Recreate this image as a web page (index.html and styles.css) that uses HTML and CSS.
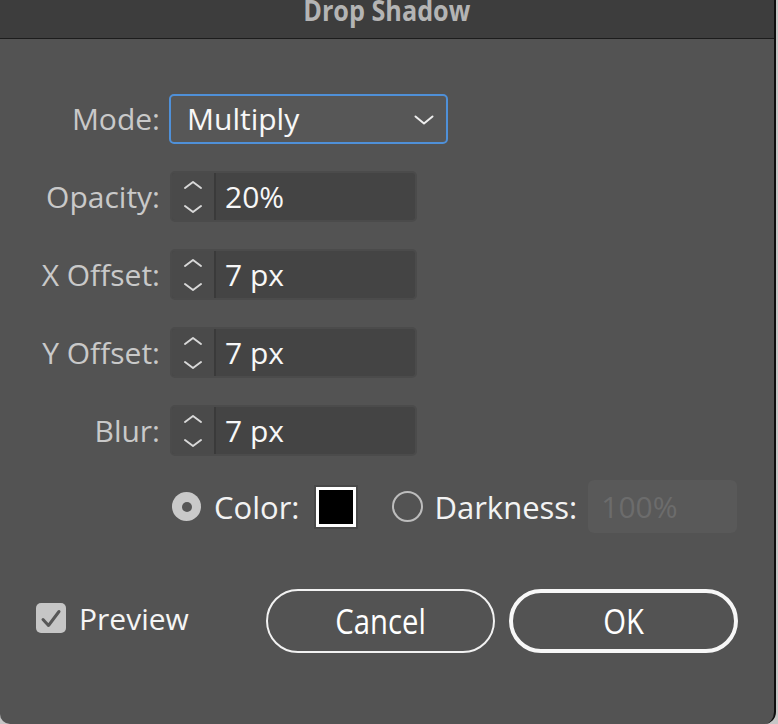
FILE: index.html
```html
<!DOCTYPE html>
<html>
<head>
<meta charset="utf-8">
<link rel="stylesheet" href="styles.css">
</head>
<body>
<div class="window">
  <div class="titlebar"><span class="title">Drop Shadow</span></div>
  <div class="content">
    <div class="form">
      <div class="label">Mode:</div>
      <div class="select">
        <span class="value">Multiply</span>
        <svg class="chev" width="20" height="10" viewBox="0 0 20 10"><path d="M1.5 1.5 L10 8.5 L18.5 1.5" fill="none" stroke="#eeeeee" stroke-width="2" stroke-linecap="round" stroke-linejoin="round"/></svg>
      </div>

      <div class="label">Opacity:</div>
      <div class="field">
        <div class="spin"><svg width="20" height="34" viewBox="0 0 20 34"><path d="M2 8 L10 2 L18 8 M2 26 L10 32 L18 26" fill="none" stroke="#d8d8d8" stroke-width="2" stroke-linecap="round" stroke-linejoin="round"/></svg></div>
        <div class="input">20%</div>
      </div>

      <div class="label">X Offset:</div>
      <div class="field">
        <div class="spin"><svg width="20" height="34" viewBox="0 0 20 34"><path d="M2 8 L10 2 L18 8 M2 26 L10 32 L18 26" fill="none" stroke="#d8d8d8" stroke-width="2" stroke-linecap="round" stroke-linejoin="round"/></svg></div>
        <div class="input">7 px</div>
      </div>

      <div class="label">Y Offset:</div>
      <div class="field">
        <div class="spin"><svg width="20" height="34" viewBox="0 0 20 34"><path d="M2 8 L10 2 L18 8 M2 26 L10 32 L18 26" fill="none" stroke="#d8d8d8" stroke-width="2" stroke-linecap="round" stroke-linejoin="round"/></svg></div>
        <div class="input">7 px</div>
      </div>

      <div class="label">Blur:</div>
      <div class="field">
        <div class="spin"><svg width="20" height="34" viewBox="0 0 20 34"><path d="M2 8 L10 2 L18 8 M2 26 L10 32 L18 26" fill="none" stroke="#d8d8d8" stroke-width="2" stroke-linecap="round" stroke-linejoin="round"/></svg></div>
        <div class="input">7 px</div>
      </div>
    </div>

    <div class="colorrow">
      <span class="radio on"><span class="dot"></span></span>
      <span class="rlabel color-label">Color:</span>
      <span class="swatch"><span class="swatch-in"></span></span>
      <span class="radio off"></span>
      <span class="rlabel dark-label">Darkness:</span>
      <span class="disabled">100%</span>
    </div>

    <div class="bottom">
      <span class="check"><svg width="30" height="30" viewBox="0 0 30 30"><path d="M7 16.5 L12.5 22.5 L23 8.5" fill="none" stroke="#575757" stroke-width="3" stroke-linecap="round" stroke-linejoin="round"/></svg></span>
      <span class="preview">Preview</span>
      <div class="buttons">
        <button class="btn cancel"><span class="btxt">Cancel</span></button>
        <button class="btn ok"><span class="btxt">OK</span></button>
      </div>
    </div>
  </div>
</div>
</body>
</html>
```

FILE: styles.css
```css
html, body {
  margin: 0;
  padding: 0;
}
body {
  background: #c6c6c6;
  width: 778px;
  height: 724px;
  overflow: hidden;
  font-family: "Open Sans", "Noto Sans", sans-serif;
}
.window {
  width: 776px;
  height: 724px;
  box-sizing: border-box;
  background: #535353;
  border-right: 2px solid #0e0e0e;
  border-radius: 0 0 12px 10px;
  overflow: hidden;
}
.titlebar {
  height: 38px;
  background: #3d3d3d;
  border-bottom: 1px solid #1c1c1c;
  display: flex;
  justify-content: center;
  overflow: hidden;
}
.title {
  display: inline-block;
  font-weight: 700;
  font-size: 28px;
  line-height: 28px;
  margin-top: -4px;
  color: #b4b4b4;
  transform: scaleX(0.9);
}
.content {
  padding: 55px 36px 0 0;
}
.form {
  display: grid;
  grid-template-columns: 160px auto;
  column-gap: 9px;
  row-gap: 27px;
  align-items: center;
  justify-content: start;
}
.label {
  text-align: right;
  font-size: 30px;
  font-weight: 500;
  color: #c9c9c9;
  line-height: 40px;
}
.select {
  width: 279px;
  height: 50px;
  box-sizing: border-box;
  border: 2px solid #4f90d8;
  border-radius: 5px;
  background: #575757;
  display: flex;
  align-items: center;
  justify-content: space-between;
  padding: 0 12px 0 16px;
}
.value {
  font-size: 30px;
  font-weight: 500;
  color: #f7f7f7;
  line-height: 40px;
}
.chev {
  display: block;
  margin-top: 1px;
}
.field {
  margin-left: 1px;
  width: 247px;
  height: 51px;
  box-sizing: border-box;
  border: 2px solid #4b4b4b;
  border-radius: 5px;
  background: #444444;
  display: flex;
  overflow: hidden;
}
.spin {
  width: 42px;
  background: #4a4a4a;
  border-right: 2px solid #3a3a3a;
  display: flex;
  align-items: center;
  justify-content: center;
}
.spin svg {
  display: block;
}
.input {
  flex: 1;
  padding-left: 9px;
  display: flex;
  align-items: center;
  font-size: 30px;
  font-weight: 500;
  color: #f7f7f7;
}
.colorrow {
  margin-top: 24px;
  margin-left: 172px;
  height: 53px;
  display: flex;
  align-items: center;
}
.radio {
  width: 29px;
  height: 29px;
  box-sizing: border-box;
  border-radius: 50%;
  display: flex;
  align-items: center;
  justify-content: center;
  flex: none;
}
.radio.on {
  background: #c9c9c9;
}
.radio.on .dot {
  width: 10px;
  height: 10px;
  border-radius: 50%;
  background: #565656;
}
.radio.off {
  border: 2px solid #bdbdbd;
  width: 31px;
  height: 31px;
  margin-left: 34px;
}
.rlabel {
  font-size: 31px;
  font-weight: 500;
  color: #f3f3f3;
  line-height: 40px;
}
.color-label {
  margin-left: 13px;
}
.dark-label {
  margin-left: 11px;
}
.swatch {
  margin-left: 15px;
  width: 44px;
  height: 44px;
  box-sizing: border-box;
  border: 2px solid #484848;
  display: flex;
  flex: none;
}
.swatch-in {
  flex: 1;
  background: #000;
  border: 3px solid #ffffff;
}
.disabled {
  margin-left: 11px;
  width: 149px;
  height: 53px;
  box-sizing: border-box;
  background: #595959;
  border-radius: 6px;
  padding-left: 13px;
  display: flex;
  align-items: center;
  font-size: 30px;
  color: #6c6c6c;
}
.bottom {
  margin-top: 56px;
  padding-left: 36px;
  display: flex;
  align-items: center;
  height: 64px;
}
.check {
  width: 30px;
  height: 30px;
  border-radius: 5px;
  background: #c6c6c6;
  display: block;
  margin-top: -6px;
}
.check svg {
  display: block;
}
.preview {
  margin-left: 13px;
  margin-top: -4px;
  font-size: 30px;
  font-weight: 500;
  color: #f5f5f5;
  line-height: 40px;
}
.buttons {
  margin-left: auto;
  display: flex;
  gap: 14px;
}
.btn {
  width: 229px;
  height: 64px;
  box-sizing: border-box;
  border-radius: 32px;
  background: #535353;
  color: #ffffff;
  font-family: "Open Sans", "Noto Sans", sans-serif;
  font-size: 34px;
  font-weight: 500;
  padding: 0;
  display: flex;
  align-items: center;
  justify-content: center;
}
.cancel {
  border: 2px solid #f2f2f2;
}
.ok {
  border: 4px solid #f7f7f7;
}
.btxt {
  display: inline-block;
  transform: scaleX(0.86);
  line-height: 40px;
}
```
